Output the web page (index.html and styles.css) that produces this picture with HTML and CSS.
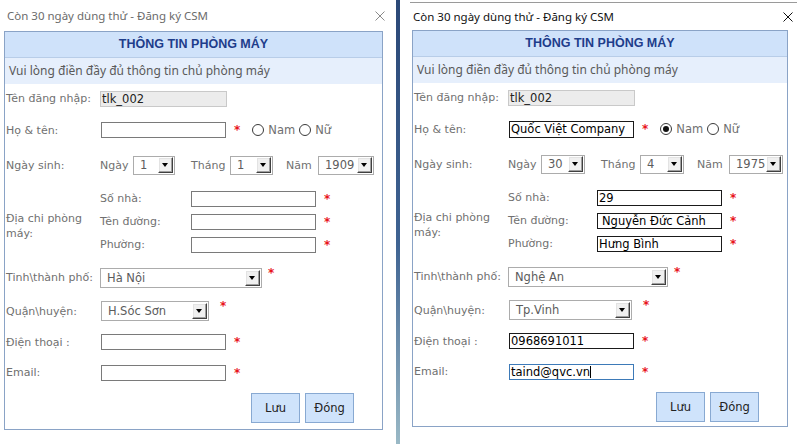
FILE: index.html
```html
<!DOCTYPE html>
<html lang="vi">
<head>
  <meta charset="UTF-8">
  <title>Đăng ký CSM</title>
  <link rel="stylesheet" href="styles.css">
</head>
<body>
<div class="win win-left">
  <div class="titlebar">
    <span class="ttl">Còn 30 ngày dùng thử - Đăng ký CSM</span>
    <svg class="close" viewBox="0 0 10 10"><path d="M0.5 0.5 L9.5 9.5 M9.5 0.5 L0.5 9.5"/></svg>
  </div>
  <div class="panel">
    <div class="head">THÔNG TIN PHÒNG MÁY</div>
    <div class="sub">Vui lòng điền đầy đủ thông tin chủ phòng máy</div>

    <div class="row r-user"><span class="lbl">Tên đăng nhập:</span><span class="fld dis">tlk_002</span></div>

    <div class="row r-name">
      <span class="lbl">Họ &amp; tên:</span><span class="fld"></span><span class="req">*</span>
      <span class="radio"></span><span class="opt">Nam</span>
      <span class="radio"></span><span class="opt">Nữ</span>
    </div>

    <div class="row r-dob">
      <span class="lbl">Ngày sinh:</span>
      <span class="dlbl">Ngày</span><span class="sel s-day"><span class="val">1</span><span class="btn"></span></span>
      <span class="dlbl d-month">Tháng</span><span class="sel s-month"><span class="val">1</span><span class="btn"></span></span>
      <span class="dlbl d-year">Năm</span><span class="sel s-year"><span class="val">1909</span><span class="btn"></span></span>
    </div>

    <div class="addr">
      <span class="lbl">Địa chi phòng<br>máy:</span>
      <div class="addr-rows">
        <div class="arow"><span class="albl">Số nhà:</span><span class="fld"></span><span class="req">*</span></div>
        <div class="arow"><span class="albl">Tên đường:</span><span class="fld"></span><span class="req">*</span></div>
        <div class="arow"><span class="albl">Phường:</span><span class="fld"></span><span class="req">*</span></div>
      </div>
    </div>

    <div class="row r-city"><span class="lbl">Tinh\thành phố:</span><span class="sel s-city"><span class="val">Hà Nội</span><span class="btn"></span></span><span class="req up">*</span></div>
    <div class="row r-dist"><span class="lbl">Quận\huyện:</span><span class="sel s-dist"><span class="val">H.Sóc Sơn</span><span class="btn"></span></span><span class="req up">*</span></div>
    <div class="row r-phone"><span class="lbl">Điện thoại :</span><span class="fld"></span><span class="req">*</span></div>
    <div class="row r-mail"><span class="lbl">Email:</span><span class="fld"></span><span class="req">*</span></div>

    <div class="actions">
      <button class="bt">Lưu</button>
      <button class="bt">Đóng</button>
    </div>
  </div>
</div>

<div class="desk"></div>

<div class="win win-right">
  <div class="titlebar">
    <span class="ttl">Còn 30 ngày dùng thử - Đăng ký CSM</span>
    <svg class="close" viewBox="0 0 10 10"><path d="M0.5 0.5 L9.5 9.5 M9.5 0.5 L0.5 9.5"/></svg>
  </div>
  <div class="panel">
    <div class="head">THÔNG TIN PHÒNG MÁY</div>
    <div class="sub">Vui lòng điền đầy đủ thông tin chủ phòng máy</div>

    <div class="row r-user"><span class="lbl">Tên đăng nhập:</span><span class="fld dis">tlk_002</span></div>

    <div class="row r-name">
      <span class="lbl">Họ &amp; tên:</span><span class="fld set">Quốc Việt Company</span><span class="req">*</span>
      <span class="radio on"></span><span class="opt">Nam</span>
      <span class="radio"></span><span class="opt">Nữ</span>
    </div>

    <div class="row r-dob">
      <span class="lbl">Ngày sinh:</span>
      <span class="dlbl">Ngày</span><span class="sel s-day"><span class="val">30</span><span class="btn"></span></span>
      <span class="dlbl d-month">Tháng</span><span class="sel s-month"><span class="val">4</span><span class="btn"></span></span>
      <span class="dlbl d-year">Năm</span><span class="sel s-year"><span class="val">1975</span><span class="btn"></span></span>
    </div>

    <div class="addr">
      <span class="lbl">Địa chi phòng<br>máy:</span>
      <div class="addr-rows">
        <div class="arow"><span class="albl">Số nhà:</span><span class="fld set">29</span><span class="req">*</span></div>
        <div class="arow"><span class="albl">Tên đường:</span><span class="fld set pad">Nguyễn Đức Cảnh</span><span class="req">*</span></div>
        <div class="arow"><span class="albl">Phường:</span><span class="fld set">Hưng Bình</span><span class="req">*</span></div>
      </div>
    </div>

    <div class="row r-city"><span class="lbl">Tinh\thành phố:</span><span class="sel s-city"><span class="val">Nghệ An</span><span class="btn"></span></span><span class="req up">*</span></div>
    <div class="row r-dist"><span class="lbl">Quận\huyện:</span><span class="sel s-dist"><span class="val">Tp.Vinh</span><span class="btn"></span></span><span class="req up">*</span></div>
    <div class="row r-phone"><span class="lbl">Điện thoại :</span><span class="fld set">0968691011</span><span class="req">*</span></div>
    <div class="row r-mail"><span class="lbl">Email:</span><span class="fld set focus">taind@qvc.vn<i class="caret"></i></span><span class="req">*</span></div>

    <div class="actions">
      <button class="bt">Lưu</button>
      <button class="bt">Đóng</button>
    </div>
  </div>
</div>
</body>
</html>
```

FILE: styles.css
```css
* { box-sizing: border-box; }
html, body { margin: 0; padding: 0; background: #fff; }
body {
  display: flex; width: 797px; height: 444px; overflow: hidden;
  font-family: "DejaVu Sans", Verdana, sans-serif; font-size: 11px; color: #707070;
}

.win { position: relative; height: 444px; background: #fff; }
.win-left { width: 396px; }
.win-right { flex: 1; }
.desk { width: 4px; background: linear-gradient(#2b4877, #3f6392 55%, #9ab9c6); }

.titlebar { height: 31px; display: flex; align-items: center; justify-content: space-between; }
.win-left .titlebar { padding: 0 11px 0 7px; }
.win-right .titlebar {
  margin: 2px 0 0 10px; height: 28px; border-top: 1px solid #9a9a9a;
  padding: 0 4px 0 3px;
}
.ttl { font-family: "Noto Sans", "Open Sans", sans-serif; font-size: 11.5px; color: #6b6b6b; }
.win-right .ttl { color: #111; }
.close { width: 10px; height: 10px; }
.close path { stroke: #8a8a8a; stroke-width: 1; fill: none; }
.win-right .close path { stroke: #111; }

.panel { border: 1px solid #8aa3c6; height: 399px; }
.win-left .panel { margin-left: 4px; width: 379px; }
.win-right .panel { margin-left: 12px; width: 376px; height: 397px; }

.head {
  height: 26px; line-height: 25px; text-align: center;
  background: #cfe2fa; border-bottom: 1px solid #b8cde8;
  font-family: "Liberation Sans", Arial, sans-serif; font-weight: bold; font-size: 12.5px; color: #1e3d8b;
}
.sub {
  height: 26px; line-height: 25px; padding-left: 4px; background: #e6effc;
  font-family: "Noto Sans", "Open Sans", sans-serif; font-size: 12px; color: #5a5a5a;
}

.row { display: flex; align-items: center; padding-left: 1px; }
.lbl { width: 94px; flex: none; }
.r-user { height: 29px; }
.r-name { height: 34px; }
.r-dob { height: 36px; }
.r-city { height: 33px; }
.r-dist { height: 34px; }
.r-phone { height: 28px; }
.r-mail { height: 33px; }

.fld {
  display: inline-block; width: 125px; height: 16px; line-height: 14px;
  border: 1px solid #7a7a7a; background: #fff; padding: 0 1px;
  font-size: 11.5px; color: #000; white-space: nowrap; overflow: hidden;
}
.r-name .fld, .r-phone .fld, .r-mail .fld { margin-left: 1px; }
.fld.dis { width: 127px; background: #ececec; border-color: #c9c9c9; color: #222; }
.fld.set { border-color: #1a1a1a; }
.fld.pad { padding-left: 4px; }
.fld.focus { border-color: #3d7ab8; }
.win-right .r-name .fld { height: 17px; }
.caret { display: inline-block; width: 1px; height: 12px; background: #000; vertical-align: -2px; }

.req { color: #e8141b; font-weight: bold; font-size: 12px; margin-left: 8px; }
.req.up { align-self: flex-start; margin-top: 5px; margin-left: 6px; }
.r-dist .req.up { margin-left: 11px; }

.radio {
  width: 12px; height: 12px; border: 1px solid #3a3a3a; border-radius: 50%;
  margin-left: 12px; display: inline-flex; align-items: center; justify-content: center;
}
.radio + .opt + .radio { margin-left: 4px; }
.radio.on::after { content: ""; width: 6px; height: 6px; border-radius: 50%; background: #111; }
.opt { margin-left: 4px; font-size: 11.5px; }

.dlbl { width: 33px; }
.d-month { margin-left: 16px; width: 39px; }
.d-year { margin-left: 13px; width: 32px; }

.sel {
  display: inline-flex; align-items: center; justify-content: space-between;
  height: 19px; border: 1px solid #acacac; background: #fff; padding: 0 1px 0 6px;
  font-size: 11.5px; color: #5c5c5c;
}
.s-day { width: 42px; }
.s-month { width: 43px; }
.s-year { width: 56px; }
.win-right .s-day { width: 44px; }
.win-right .s-month { width: 44px; }
.win-right .s-year { width: 54px; }
.s-city { width: 162px; height: 20px; }
.s-dist { width: 108px; margin-left: 1px; height: 20px; }
.win-right .s-city { width: 160px; }
.win-right .s-dist { width: 123px; }
.btn {
  position: relative; width: 15px; height: 16px; flex: none;
  background: #f0f0f0; border: 1px solid; border-color: #fff #404040 #404040 #fff;
  box-shadow: inset -1px -1px 0 #a0a0a0, inset 1px 1px 0 #e3e3e3;
}
.btn::after {
  content: ""; position: absolute; left: 3px; top: 5px;
  border-left: 3.5px solid transparent; border-right: 3.5px solid transparent; border-top: 4px solid #000;
}

.addr { display: flex; align-items: center; padding: 4px 0 5px 1px; }
.addr .lbl { line-height: 15px; padding-top: 8px; }
.arow { display: flex; align-items: center; height: 23px; }
.albl { width: 91px; padding-left: 0; }
.win-right .albl { width: 89px; }
.arow .req { margin-left: 8px; }

.actions { display: flex; justify-content: flex-end; gap: 5px; padding: 4px 28px 0 0; }
.bt {
  width: 49px; height: 30px; background: #cfe3fb; border: 1px solid #88a9d2;
  font-family: "DejaVu Sans", Verdana, sans-serif; font-size: 11.5px; color: #222; padding: 0;
}
```
